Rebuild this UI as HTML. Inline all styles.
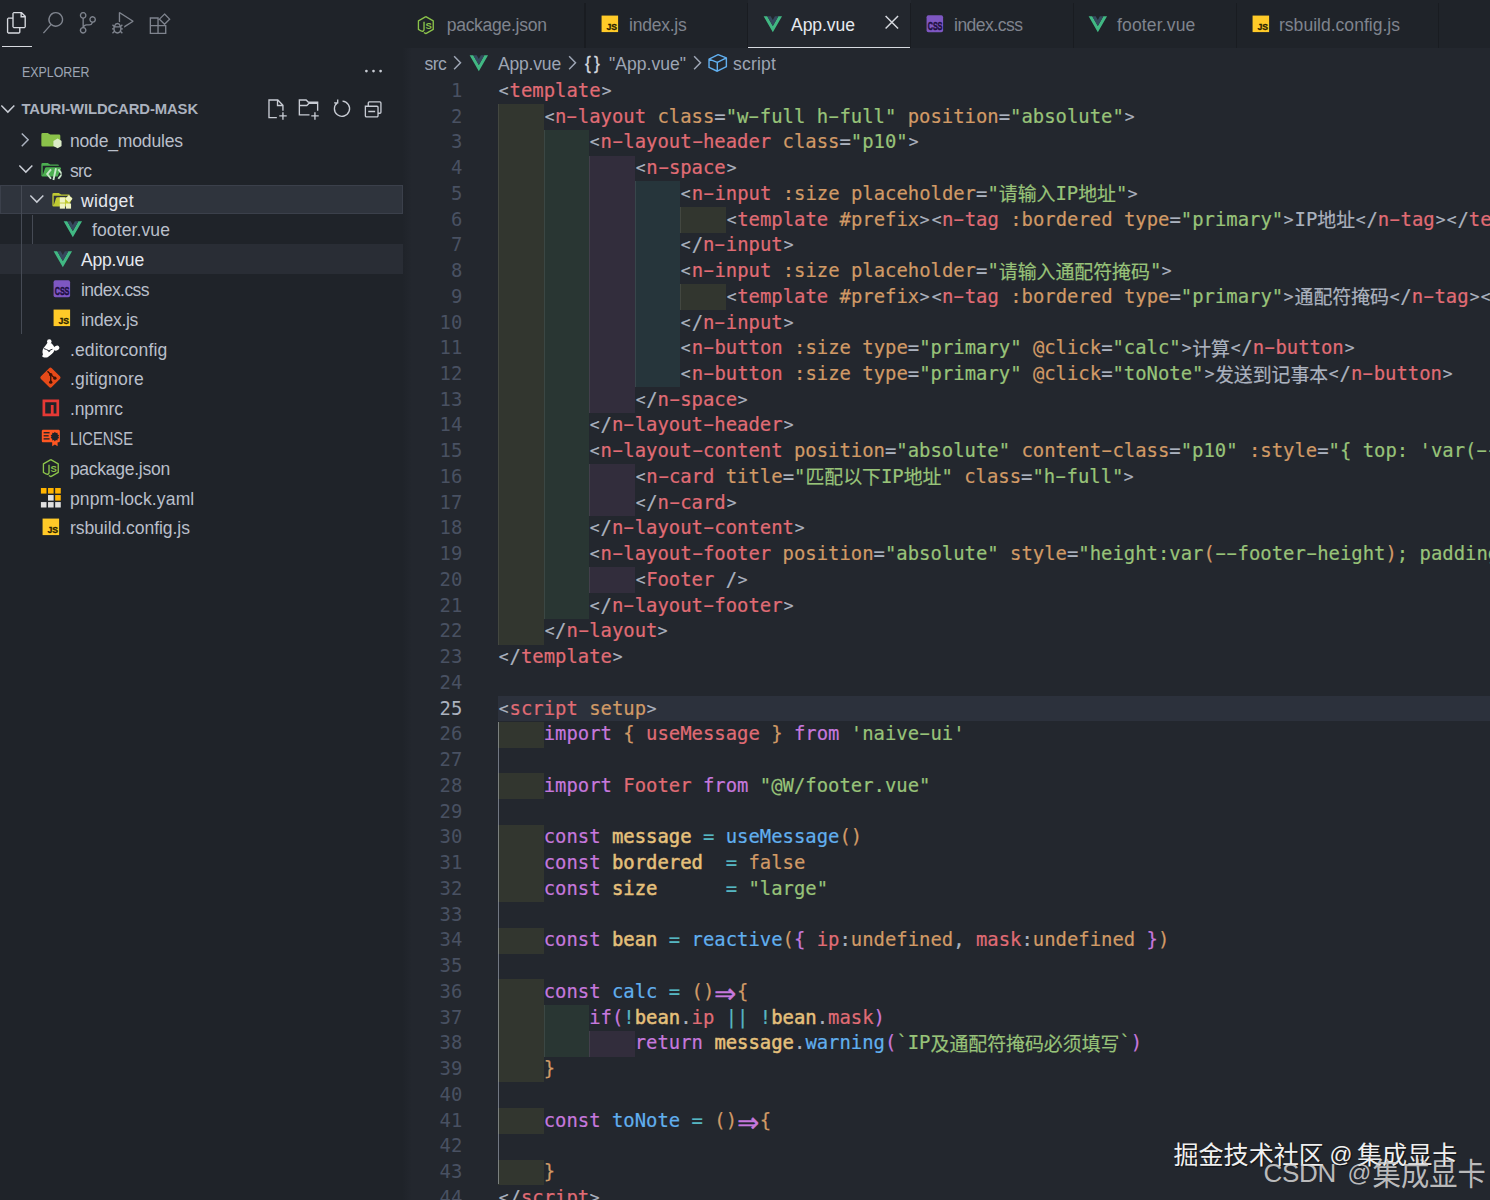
<!DOCTYPE html>
<html lang="zh">
<head>
<meta charset="utf-8">
<title>App.vue - tauri-wildcard-mask</title>
<style>
html,body{margin:0;padding:0;}
body{width:1490px;height:1200px;overflow:hidden;background:#23272e;position:relative;font-family:"Liberation Sans","Noto Sans CJK SC",sans-serif;color:#abb2bf;}
#side{position:absolute;left:0;top:0;width:403px;height:1200px;background:#1f2329;}
#tabs{position:absolute;left:403px;top:0;width:1087px;height:47.5px;background:#1f2329;}
.abs{position:absolute;}
svg{display:block;overflow:visible;}
.ui{font-family:"Liberation Sans","Noto Sans CJK SC",sans-serif;white-space:pre;position:absolute;}
/* code */
.cl{position:absolute;white-space:pre;font-family:"DejaVu Sans Mono","Liberation Mono","Noto Sans CJK SC",monospace;font-size:18.9px;line-height:25.745px;height:25.745px;letter-spacing:0;overflow:visible;}
.cl b.cj{font-weight:normal;font-family:"Noto Sans CJK SC",sans-serif;display:inline-block;height:25.745px;line-height:25.745px;vertical-align:top;position:relative;top:-0.5px;}
.ln{position:absolute;left:403px;width:59.3px;text-align:right;font-family:"DejaVu Sans Mono","Liberation Mono",monospace;font-size:18.9px;line-height:25.745px;height:25.745px;color:#495162;}
.ln.act{color:#abb2bf;}
.rb{position:absolute;display:block;}
.gd{position:absolute;display:block;width:1px;background:rgba(255,255,255,0.085);}
.ab{font-style:normal;display:inline-block;transform:scale(0.86,0.84);}
.hy{font-style:normal;display:inline-block;transform:scaleX(1.75);}
.cl{-webkit-text-stroke:0.2px;}
.cl .yb{-webkit-text-stroke:0.5px;}
.arrow{display:inline-block;width:22.76px;text-align:center;transform:translateY(0.8px) scale(1.9,1.9);}
.wm1{font-size:25.1px;line-height:34px;color:#f0f0f0;white-space:nowrap;font-family:"Liberation Sans","Noto Sans CJK SC",sans-serif;text-shadow:1px 1px 1px rgba(0,0,0,.6);}
.wm2{line-height:38px;color:rgba(214,214,214,.85);white-space:nowrap;font-family:"Liberation Sans","Noto Sans CJK SC",sans-serif;}
</style>
</head>
<body>
<svg width="0" height="0" style="position:absolute">
<defs>
<symbol id="chev-r" viewBox="0 0 16 16"><path d="M5 3.3 L9.700 8 L5 12.700" fill="none" stroke="#abb2bf" stroke-width="1.1"/></symbol>
<symbol id="chev-d" viewBox="0 0 16 16"><path d="M3.2 5.6 L8 10.4 L12.8 5.6" fill="none" stroke="#c8ccd4" stroke-width="1.1"/></symbol>
<symbol id="chev-r2" viewBox="0 0 16 16"><path d="M6 3.2 L10.7 8 L6 12.8" fill="none" stroke="#9da5b4" stroke-width="1.1"/></symbol>
<symbol id="i-vue" viewBox="0 0 24 24"><path fill="#41b883" d="M1.8 3.7 12 21.3 22.2 3.7h-4.1L12 14.3 5.8 3.7z"/><path fill="#35495e" d="M5.8 3.7 12 14.3l6.1-10.6h-3.8L12 7.8 9.6 3.7z"/></symbol>
<symbol id="i-js" viewBox="0 0 24 24"><rect x="2.85" y="2.85" width="18.3" height="18.3" fill="#ffca28"/><text x="20.1" y="19" text-anchor="end" font-family="Liberation Sans,sans-serif" font-weight="bold" font-size="9.6" fill="#2a1f00" stroke="#2a1f00" stroke-width="0.35" letter-spacing="0">JS</text></symbol>
<symbol id="i-css" viewBox="0 0 24 24"><rect x="2.85" y="2.6" width="18.3" height="18.8" rx="2" fill="#7e57c2"/><text transform="translate(12.2 19.3) scale(0.62 1)" x="0" y="0" text-anchor="middle" font-family="Liberation Sans,sans-serif" font-weight="bold" font-size="13" fill="#1d0f40" stroke="#1d0f40" stroke-width="0.5" letter-spacing="-0.3">CSS</text></symbol>
<symbol id="i-nodejs" viewBox="0 0 24 24"><g transform="translate(0 1.500)"><path d="M12 2.600 L20.200 7.300 V16.700 L12 21.400 L9.800 20.100 M12 2.600 L3.800 7.300 V16.700 L6.800 18.400 C8.600 19.200 10 18.400 10 16.800 V8.200" fill="none" stroke="#8bc34a" stroke-width="1.500" stroke-linejoin="round"/><text x="15.200" y="16.200" text-anchor="middle" font-family="Liberation Sans,sans-serif" font-weight="bold" font-size="10.500" fill="#8bc34a">S</text></g></symbol>
<symbol id="i-fnode" viewBox="0 0 32 32"><path fill="#8bc34a" d="M13.844 7.536l-1.288-1.072A2 2 0 0 0 11.276 6H4a2 2 0 0 0-2 2v16a2 2 0 0 0 2 2h24a2 2 0 0 0 2-2V10a2 2 0 0 0-2-2H15.124a2 2 0 0 1-1.280-.464z"/><path fill="#dcedc8" d="M26 14.200l6.200 3.600v7.200L26 28.600l-6.200-3.600v-7.200z"/></symbol>
<symbol id="i-fsrc" viewBox="0 0 32 32"><path fill="#4caf50" d="M28.967 12H9.442a2 2 0 0 0-1.898 1.368L4 24V10h24a2 2 0 0 0-2-2H15.124a2 2 0 0 1-1.280-.464l-1.288-1.072A2 2 0 0 0 11.276 6H4a2 2 0 0 0-2 2v16a2 2 0 0 0 2 2h22l4.805-11.212A2 2 0 0 0 28.967 12z"/><path fill="none" stroke="#c8e6c9" stroke-width="2.800" d="M16.300 15.200 10.600 22.200l5.700 7M27 15.200l5.700 7-5.700 7M23.600 13.600l-3.800 17.400"/></symbol>
<symbol id="i-fwidget" viewBox="0 0 32 32"><path fill="#c0ca33" d="M28.967 12H9.442a2 2 0 0 0-1.898 1.368L4 24V10h24a2 2 0 0 0-2-2H15.124a2 2 0 0 1-1.280-.464l-1.288-1.072A2 2 0 0 0 11.276 6H4a2 2 0 0 0-2 2v16a2 2 0 0 0 2 2h22l4.805-11.212A2 2 0 0 0 28.967 12z"/><g fill="#f0f4c3"><rect x="13" y="12.400" width="7.600" height="7.600"/><rect x="13" y="21.400" width="7.600" height="7.600"/><rect x="22" y="21.400" width="7.600" height="7.600"/><path d="M26.400 8.800l5.600 5.600-5.600 5.600-5.600-5.600z"/></g></symbol>
<symbol id="i-editorconfig" viewBox="0 0 24 24"><g fill="#fdfdfd"><circle cx="10.300" cy="5.100" r="2.500"/><ellipse cx="18.300" cy="12.300" rx="3.300" ry="2.500" transform="rotate(-35 18.300 12.300)"/><path d="M8.300 6.500 L12.600 6.800 C14.500 8.500 16 10.500 16.300 12.800 C16.300 16.500 12.500 20 8.500 22.300 C6.500 23.300 3.200 22.800 2.300 21.300 L3.300 19.300 C2 16.500 3 12.500 5.500 10.300 C6.500 9 7.500 8 8.300 6.500Z"/></g><path fill="none" stroke="#2a2e36" stroke-width="1.100" d="M4.300 12.800 C6.500 13.200 8 14.500 9.800 15.300 C11 14.300 12.500 13.800 13.800 13.600 M8.800 14.300l1 2 1.800-1.200"/></symbol>
<symbol id="i-git" viewBox="0 0 24 24"><rect x="3.100" y="3.300" width="16.900" height="16.900" rx="2.100" fill="#e64a19" transform="rotate(45 11.550 11.750)"/><g fill="none" stroke="#3a1206" stroke-width="1.500"><path d="M8.300 4.800 11.900 8.400 V16.500"/><path d="M12 8.600 16.200 12.200"/></g><g fill="#3a1206"><circle cx="11.900" cy="8.500" r="1.850"/><circle cx="11.900" cy="16.800" r="1.850"/><circle cx="16.500" cy="12.400" r="1.850"/></g></symbol>
<symbol id="i-npm" viewBox="0 0 24 24"><path fill="#e53935" d="M2.800 2.800h18.400v18.400H2.800z"/><path fill="#1f2329" d="M5.800 5.800h12.400v12.400h-3.100V8.900H12v9.300H5.800z"/></symbol>
<symbol id="i-license" viewBox="0 0 24 24"><path fill="#ff5722" d="M3.500 3h17c.8 0 1.500.7 1.500 1.500v11c0 .8-.7 1.500-1.500 1.500H19.500v4.300l-3-2-3 2V17H3.500C2.700 17 2 16.300 2 15.500v-11C2 3.700 2.700 3 3.500 3z"/><g fill="#1f2329"><rect x="4" y="5.600" width="6.600" height="1.500"/><rect x="4" y="9" width="5.600" height="1.500"/><rect x="4" y="12.400" width="6.600" height="1.500"/><path d="M16.500 5.200l1.100 1.500 1.800-.4.100 1.900 1.700.8-1 1.600 1 1.600-1.700.8-.1 1.900-1.800-.4-1.100 1.500-1.100-1.500-1.800.4-.1-1.900-1.700-.8 1-1.600-1-1.600 1.700-.8.100-1.900 1.800.4z"/></g></symbol>
<symbol id="i-pnpm" viewBox="0 0 24 24"><g transform="translate(0 1)"><g fill="#ffb300"><rect x="1" y="1.200" width="6.200" height="6.200"/><rect x="8.900" y="1.200" width="6.200" height="6.200"/><rect x="16.800" y="1.200" width="6.200" height="6.200"/><rect x="16.800" y="9" width="6.200" height="6.200"/></g><g fill="#e0e0e0"><rect x="8.900" y="9" width="6.200" height="6.200"/><rect x="1" y="16.800" width="6.200" height="6.200"/><rect x="8.900" y="16.800" width="6.200" height="6.200"/><rect x="16.800" y="16.800" width="6.200" height="6.200"/></g></g></symbol>
<symbol id="i-symbol" viewBox="0 0 16 16"><path fill="none" stroke="#61afef" stroke-width="1.050" stroke-linejoin="round" d="M8.200 2 L14.300 4.300 V10.800 L7.600 14.200 L1.500 11.400 V5.200 Z M1.500 5.200 L7.600 7.700 L14.300 4.300 M7.600 7.700 V14.200"/></symbol>
</defs>
</svg>
<div id="side"></div>
<div id="tabs"></div>
<!-- activity bar -->
<div class="abs" style="left:2px;top:45.6px;width:30px;height:1.5px;background:#d7dae0;"></div>
<svg class="abs" style="left:6.3px;top:11.8px" width="21.7" height="21.7" viewBox="0 0 24 24"><path fill="#d7dae0" d="M17.500 0h-9L7 1.500V6H2.500L1 7.500v15.070L2.500 24h12.070L16 22.570V18h4.700l1.300-1.430V4.500L17.500 0zm0 2.120l2.380 2.380H17.500V2.120zm-3 20.380h-12v-15H7v9.070L8.500 18h6v4.500zm6-6h-12v-15H16V6h4.500v10.500z"/></svg>
<svg class="abs" style="left:41.500px;top:11.8px" width="21.7" height="21.7" viewBox="0 0 24 24"><path fill="#7f848e" d="M15.250 0a8.250 8.250 0 0 0-6.180 13.720L1 22.880l1.120 1 8.050-9.120A8.251 8.251 0 1 0 15.250.01V0zm0 15a6.750 6.750 0 1 1 0-13.500 6.750 6.750 0 0 1 0 13.500z"/></svg>
<svg class="abs" style="left:76.500px;top:11.8px" width="21.7" height="21.7" viewBox="0 0 24 24"><path fill="#7f848e" d="M21.007 8.222A3.738 3.738 0 0 0 15.045 5.200a3.737 3.737 0 0 0 1.156 6.583 2.988 2.988 0 0 1-2.668 1.670h-2.990a4.456 4.456 0 0 0-2.989 1.165V7.400a3.737 3.737 0 1 0-1.494 0v9.117a3.776 3.776 0 1 0 1.816.099 2.990 2.990 0 0 1 2.668-1.667h2.990a4.484 4.484 0 0 0 4.223-3.039 3.736 3.736 0 0 0 3.250-3.687zM4.565 3.738a2.242 2.242 0 1 1 4.484 0 2.242 2.242 0 0 1-4.484 0zm4.484 16.441a2.242 2.242 0 1 1-4.484 0 2.242 2.242 0 0 1 4.484 0zm8.221-9.715a2.242 2.242 0 1 1 0-4.485 2.242 2.242 0 0 1 0 4.485z"/></svg>
<svg class="abs" style="left:111.500px;top:11.8px" width="21.7" height="21.7" viewBox="0 0 24 24"><path fill="#7f848e" d="M10.940 13.500l-1.320 1.320a3.730 3.730 0 0 0-7.240 0L1.060 13.500 0 14.560l1.720 1.720-.22.220V18H0v1.500h1.500v.080c.077.489.214.966.410 1.420L0 22.940 1.060 24l1.650-1.650A4.308 4.308 0 0 0 6 24a4.310 4.310 0 0 0 3.290-1.650L10.940 24 12 22.940 10.090 21c.198-.464.336-.951.410-1.450v-.100H12V18h-1.500v-1.500l-.22-.22L12 14.560l-1.060-1.060zM6 13.500a2.250 2.250 0 0 1 2.250 2.250h-4.500A2.250 2.250 0 0 1 6 13.500zm3 6a3.330 3.330 0 0 1-3 3 3.330 3.330 0 0 1-3-3v-2.250h6v2.250zm14.760-9.900v1.260L13.500 17.370V15.600l8.500-5.370L9 2v9.460a5.070 5.070 0 0 0-1.500-.72V.630L8.640 0l15.120 9.600z"/></svg>
<svg class="abs" style="left:148.500px;top:12.500px" width="21.7" height="21.7" viewBox="0 0 24 24"><path fill="none" stroke="#7f848e" stroke-width="1.500" d="M1.500 5.500h8.500v8.500h-8.500zM1.500 14h8.500v8.500h-8.500zM10 14h8.500v8.500H10zM17.200 1.200l5.600 5.600-5.600 5.600-5.600-5.600z"/></svg>
<!-- explorer header -->
<svg class="abs" style="left:364px;top:68px" width="20" height="6" viewBox="0 0 20 6"><g fill="#c8ccd4"><circle cx="2.400" cy="3.100" r="1.350"/><circle cx="9.500" cy="3.100" r="1.350"/><circle cx="16.600" cy="3.100" r="1.350"/></g></svg>
<svg class="abs" style="left:-3.200px;top:97.900px" width="21.680" height="21.680" viewBox="0 0 16 16"><use href="#chev-d"/></svg>
<!-- header actions -->
<svg class="abs" style="left:265.600px;top:98px" width="21.680" height="21.680" viewBox="0 0 16 16"><path fill="none" stroke="#c8ccd4" stroke-width="1" d="M8 14.500H2.200V1.500h6.500l3.800 3.800V9.500M8.500 1.500v4h4M12.500 10.500v5.500M9.800 13.200h5.500"/></svg>
<svg class="abs" style="left:298px;top:98px" width="21.680" height="21.680" viewBox="0 0 16 16"><path fill="none" stroke="#c8ccd4" stroke-width="1" d="M8.500 12.500H1V1.500h5l1.500 1.500H14.500V9.500M1 5.500h5.500l1.500-1.500H14M12.500 10.500v5.500M9.800 13.200h5.500"/></svg>
<svg class="abs" style="left:330.500px;top:98.400px" width="21.680" height="21.680" viewBox="0 0 16 16"><path fill="none" stroke="#c8ccd4" stroke-width="1" d="M4.79 3.4A5.6 5.6 0 1 0 8.49 2.32M4.95 1.1V3.6H2.3"/></svg>
<svg class="abs" style="left:363.200px;top:99.300px" width="21.100" height="21.100" viewBox="0 0 16 16"><path fill="none" stroke="#c8ccd4" stroke-width="1" d="M1.800 5.500h8.800a.8.8 0 0 1 .8.800v6.400a.8.800 0 0 1-.8.800H2.600a.8.800 0 0 1-.8-.800zM4 5.500V3a.8.800 0 0 1 .8-.8h8a.8.800 0 0 1 .8.800v7a.8.800 0 0 1-.8.800H11.400M4 9.500h5.200" /></svg>
<!-- indent guides in tree -->
<div class="ui" style="left:21.70px;top:62.23px;font-size:15.20px;line-height:19.00px;color:#9da5b4;transform:scaleX(0.8160);transform-origin:0 0;">EXPLORER</div>
<div class="ui" style="left:21.50px;top:100.17px;font-size:14.85px;line-height:18.56px;color:#abb2bf;letter-spacing:-0.113px;font-weight:bold;">TAURI-WILDCARD-MASK</div>
<div class="ui" style="left:69.90px;top:131.00px;font-size:17.55px;line-height:21.94px;color:#b9bfca;letter-spacing:-0.168px;">node_modules</div>
<svg class="abs" style="left:39.60px;top:128.96px" width="21.68" height="21.68" viewBox="0 0 32 32"><use href="#i-fnode"/></svg>
<svg class="abs" style="left:14.50px;top:128.56px" width="21.68" height="21.68" viewBox="0 0 16 16"><use href="#chev-r"/></svg>
<div class="ui" style="left:69.90px;top:160.80px;font-size:17.55px;line-height:21.94px;color:#b9bfca;letter-spacing:-0.625px;">src</div>
<svg class="abs" style="left:39.60px;top:158.76px" width="21.68" height="21.68" viewBox="0 0 32 32"><use href="#i-fsrc"/></svg>
<svg class="abs" style="left:14.50px;top:158.36px" width="21.68" height="21.68" viewBox="0 0 16 16"><use href="#chev-d"/></svg>
<div class="abs" style="left:0;top:184.50px;width:403px;height:29.20px;background:#2f343d;box-shadow:inset 0 0 0 1px #3b404b;"></div>
<div class="ui" style="left:81.00px;top:190.60px;font-size:17.55px;line-height:21.94px;color:#e6e9ef;letter-spacing:0.385px;">widget</div>
<svg class="abs" style="left:50.50px;top:188.56px" width="21.68" height="21.68" viewBox="0 0 32 32"><use href="#i-fwidget"/></svg>
<svg class="abs" style="left:26.30px;top:188.16px" width="21.68" height="21.68" viewBox="0 0 16 16"><use href="#chev-d"/></svg>
<div class="ui" style="left:92.00px;top:220.40px;font-size:17.55px;line-height:21.94px;color:#b9bfca;letter-spacing:0.100px;">footer.vue</div>
<svg class="abs" style="left:62.40px;top:217.96px" width="21.68" height="21.68" viewBox="0 0 24 24"><use href="#i-vue"/></svg>
<div class="abs" style="left:0;top:243.80px;width:403px;height:29.80px;background:#292d35;"></div>
<div class="ui" style="left:81.00px;top:250.20px;font-size:17.55px;line-height:21.94px;color:#e6e9ef;letter-spacing:-0.192px;">App.vue</div>
<svg class="abs" style="left:51.60px;top:247.76px" width="21.68" height="21.68" viewBox="0 0 24 24"><use href="#i-vue"/></svg>
<div class="ui" style="left:81.00px;top:280.00px;font-size:17.55px;line-height:21.94px;color:#b9bfca;letter-spacing:-0.566px;">index.css</div>
<svg class="abs" style="left:51.00px;top:277.56px" width="21.68" height="21.68" viewBox="0 0 24 24"><use href="#i-css"/></svg>
<div class="ui" style="left:81.00px;top:309.80px;font-size:17.55px;line-height:21.94px;color:#b9bfca;letter-spacing:-0.307px;">index.js</div>
<svg class="abs" style="left:51.00px;top:307.36px" width="21.68" height="21.68" viewBox="0 0 24 24"><use href="#i-js"/></svg>
<div class="ui" style="left:69.90px;top:339.60px;font-size:17.55px;line-height:21.94px;color:#b9bfca;letter-spacing:0.153px;">.editorconfig</div>
<svg class="abs" style="left:40.10px;top:337.16px" width="21.68" height="21.68" viewBox="0 0 24 24"><use href="#i-editorconfig"/></svg>
<div class="ui" style="left:69.90px;top:369.40px;font-size:17.55px;line-height:21.94px;color:#b9bfca;letter-spacing:0.188px;">.gitignore</div>
<svg class="abs" style="left:39.90px;top:366.96px" width="21.68" height="21.68" viewBox="0 0 24 24"><use href="#i-git"/></svg>
<div class="ui" style="left:69.90px;top:399.20px;font-size:17.55px;line-height:21.94px;color:#b9bfca;letter-spacing:-0.099px;">.npmrc</div>
<svg class="abs" style="left:39.90px;top:396.76px" width="21.68" height="21.68" viewBox="0 0 24 24"><use href="#i-npm"/></svg>
<div class="ui" style="left:69.90px;top:429.00px;font-size:17.55px;line-height:21.94px;color:#b9bfca;transform:scaleX(0.8397);transform-origin:0 0;">LICENSE</div>
<svg class="abs" style="left:40.00px;top:426.56px" width="21.68" height="21.68" viewBox="0 0 24 24"><use href="#i-license"/></svg>
<div class="ui" style="left:69.90px;top:458.80px;font-size:17.55px;line-height:21.94px;color:#b9bfca;letter-spacing:-0.277px;">package.json</div>
<svg class="abs" style="left:40.00px;top:456.36px" width="21.68" height="21.68" viewBox="0 0 24 24"><use href="#i-nodejs"/></svg>
<div class="ui" style="left:69.90px;top:488.60px;font-size:17.55px;line-height:21.94px;color:#b9bfca;letter-spacing:0.124px;">pnpm-lock.yaml</div>
<svg class="abs" style="left:39.60px;top:486.16px" width="21.68" height="21.68" viewBox="0 0 24 24"><use href="#i-pnpm"/></svg>
<div class="ui" style="left:69.90px;top:518.40px;font-size:17.55px;line-height:21.94px;color:#b9bfca;letter-spacing:-0.049px;">rsbuild.config.js</div>
<svg class="abs" style="left:39.80px;top:515.96px" width="21.68" height="21.68" viewBox="0 0 24 24"><use href="#i-js"/></svg>
<div class="abs" style="left:21px;top:185.200px;width:1px;height:148.800px;background:#454a54;"></div>
<div class="abs" style="left:32px;top:214.500px;width:1px;height:29.500px;background:#454a54;"></div>
<svg class="abs" style="left:415.30px;top:12.70px" width="21.68" height="21.68" viewBox="0 0 24 24"><use href="#i-nodejs"/></svg>
<div class="ui" style="left:446.70px;top:14.85px;font-size:17.55px;line-height:21.94px;color:#7f848e;letter-spacing:-0.277px;">package.json</div>
<svg class="abs" style="left:598.50px;top:12.70px" width="21.68" height="21.68" viewBox="0 0 24 24"><use href="#i-js"/></svg>
<div class="ui" style="left:629.00px;top:14.85px;font-size:17.55px;line-height:21.94px;color:#7f848e;letter-spacing:-0.244px;">index.js</div>
<div class="abs" style="left:747.8px;top:0px;width:163.0px;height:47.6px;background:#23272e;border-bottom:1.3px solid #d7dae0;box-sizing:border-box;"></div>
<svg class="abs" style="left:762.20px;top:12.70px" width="21.68" height="21.68" viewBox="0 0 24 24"><use href="#i-vue"/></svg>
<div class="ui" style="left:791.00px;top:14.85px;font-size:17.55px;line-height:21.94px;color:#e6e9ef;letter-spacing:-0.049px;">App.vue</div>
<svg class="abs" style="left:924.00px;top:12.70px" width="21.68" height="21.68" viewBox="0 0 24 24"><use href="#i-css"/></svg>
<div class="ui" style="left:954.00px;top:14.85px;font-size:17.55px;line-height:21.94px;color:#7f848e;letter-spacing:-0.510px;">index.css</div>
<svg class="abs" style="left:1087.20px;top:12.70px" width="21.68" height="21.68" viewBox="0 0 24 24"><use href="#i-vue"/></svg>
<div class="ui" style="left:1117.00px;top:14.85px;font-size:17.55px;line-height:21.94px;color:#7f848e;letter-spacing:0.150px;">footer.vue</div>
<svg class="abs" style="left:1249.50px;top:12.70px" width="21.68" height="21.68" viewBox="0 0 24 24"><use href="#i-js"/></svg>
<div class="ui" style="left:1279.00px;top:14.85px;font-size:17.55px;line-height:21.94px;color:#7f848e;letter-spacing:0.010px;">rsbuild.config.js</div>
<div class="abs" style="left:584.2px;top:3px;width:1.5px;height:44.5px;background:#191c21;"></div>
<div class="abs" style="left:746.5px;top:3px;width:1.5px;height:44.5px;background:#191c21;"></div>
<div class="abs" style="left:909.5px;top:3px;width:1.5px;height:44.5px;background:#191c21;"></div>
<div class="abs" style="left:1072.5px;top:3px;width:1.5px;height:44.5px;background:#191c21;"></div>
<div class="abs" style="left:1235.5px;top:3px;width:1.5px;height:44.5px;background:#191c21;"></div>
<div class="abs" style="left:1437.5px;top:3px;width:1.5px;height:44.5px;background:#191c21;"></div>
<!-- close x on active tab -->
<svg class="abs" style="left:880.500px;top:12.300px" width="21.680" height="21.680" viewBox="0 0 16 16"><path d="M3.400 3 L12.600 12.200 M12.600 3 L3.400 12.200" stroke="#d7dae0" stroke-width="1.100" fill="none"/></svg>
<div class="ui" style="left:424.60px;top:53.55px;font-size:17.55px;line-height:21.94px;color:#9da5b4;letter-spacing:-0.625px;">src</div>
<div class="ui" style="left:498.00px;top:53.55px;font-size:17.55px;line-height:21.94px;color:#9da5b4;letter-spacing:-0.192px;">App.vue</div>
<div class="ui" style="left:585.00px;top:52.75px;font-size:17.55px;line-height:21.94px;color:#d4d8df;letter-spacing:3.141px;-webkit-text-stroke:0.3px;">{}</div>
<div class="ui" style="left:609.00px;top:53.55px;font-size:17.55px;line-height:21.94px;color:#9da5b4;letter-spacing:0.024px;">"App.vue"</div>
<div class="ui" style="left:733.00px;top:53.55px;font-size:17.55px;line-height:21.94px;color:#9da5b4;letter-spacing:0.185px;">script</div>
<svg class="abs" style="left:446.00px;top:52.2px" width="21.68" height="21.68" viewBox="0 0 16 16"><use href="#chev-r2"/></svg>
<svg class="abs" style="left:561.30px;top:52.2px" width="21.68" height="21.68" viewBox="0 0 16 16"><use href="#chev-r2"/></svg>
<svg class="abs" style="left:686.30px;top:52.2px" width="21.68" height="21.68" viewBox="0 0 16 16"><use href="#chev-r2"/></svg>
<svg class="abs" style="left:468.2px;top:51.9px" width="21.68" height="21.68" viewBox="0 0 24 24"><use href="#i-vue"/></svg>
<svg class="abs" style="left:707px;top:52.2px" width="21.68" height="21.68" viewBox="0 0 16 16"><use href="#i-symbol"/></svg>
<div class="abs" style="left:403px;top:47.5px;width:9px;height:1153px;background:linear-gradient(90deg,rgba(30,34,40,.75),rgba(35,39,46,0));"></div>
<!-- current line highlight -->
<div class="abs" style="left:498px;top:696px;width:992px;height:25.2px;background:#2c313c;"></div>
<!-- active indent guide -->
<div class="abs" style="left:497.6px;top:721.5px;width:1.7px;height:462.5px;background:#717783;"></div>
<div class="ln" style="top:77.80px">1</div>
<div class="cl" style="top:77.80px;left:498.20px"><span style="color:#abb2bf"><i class="ab">&lt;</i></span><span style="color:#e06c75">template</span><span style="color:#abb2bf"><i class="ab">&gt;</i></span></div>
<i class="rb" style="left:498px;top:104px;width:46px;height:26px;background:rgba(255,255,64,0.07)"></i>
<i class="gd" style="left:498px;top:104px;height:26px"></i>
<div class="ln" style="top:103.55px">2</div>
<div class="cl" style="top:103.55px;left:543.72px"><span style="color:#abb2bf"><i class="ab">&lt;</i></span><span style="color:#e06c75">n<i class="hy">-</i>layout</span><span style="color:#abb2bf"> </span><span style="color:#d19a66">class</span><span style="color:#abb2bf">=</span><span style="color:#98c379">"w<i class="hy">-</i>full h<i class="hy">-</i>full"</span><span style="color:#abb2bf"> </span><span style="color:#d19a66">position</span><span style="color:#abb2bf">=</span><span style="color:#98c379">"absolute"</span><span style="color:#abb2bf"><i class="ab">&gt;</i></span></div>
<i class="rb" style="left:498px;top:130px;width:46px;height:26px;background:rgba(255,255,64,0.07)"></i>
<i class="rb" style="left:544px;top:130px;width:45px;height:26px;background:rgba(127,255,127,0.07)"></i>
<i class="gd" style="left:498px;top:130px;height:26px"></i>
<i class="gd" style="left:544px;top:130px;height:26px"></i>
<div class="ln" style="top:129.29px">3</div>
<div class="cl" style="top:129.29px;left:589.24px"><span style="color:#abb2bf"><i class="ab">&lt;</i></span><span style="color:#e06c75">n<i class="hy">-</i>layout<i class="hy">-</i>header</span><span style="color:#abb2bf"> </span><span style="color:#d19a66">class</span><span style="color:#abb2bf">=</span><span style="color:#98c379">"p10"</span><span style="color:#abb2bf"><i class="ab">&gt;</i></span></div>
<i class="rb" style="left:498px;top:156px;width:46px;height:25px;background:rgba(255,255,64,0.07)"></i>
<i class="rb" style="left:544px;top:156px;width:45px;height:25px;background:rgba(127,255,127,0.07)"></i>
<i class="rb" style="left:589px;top:156px;width:46px;height:25px;background:rgba(255,127,255,0.07)"></i>
<i class="gd" style="left:498px;top:156px;height:25px"></i>
<i class="gd" style="left:544px;top:156px;height:25px"></i>
<i class="gd" style="left:589px;top:156px;height:25px"></i>
<div class="ln" style="top:155.03px">4</div>
<div class="cl" style="top:155.03px;left:634.76px"><span style="color:#abb2bf"><i class="ab">&lt;</i></span><span style="color:#e06c75">n<i class="hy">-</i>space</span><span style="color:#abb2bf"><i class="ab">&gt;</i></span></div>
<i class="rb" style="left:498px;top:181px;width:46px;height:26px;background:rgba(255,255,64,0.07)"></i>
<i class="rb" style="left:544px;top:181px;width:45px;height:26px;background:rgba(127,255,127,0.07)"></i>
<i class="rb" style="left:589px;top:181px;width:46px;height:26px;background:rgba(255,127,255,0.07)"></i>
<i class="rb" style="left:635px;top:181px;width:45px;height:26px;background:rgba(79,236,236,0.07)"></i>
<i class="gd" style="left:498px;top:181px;height:26px"></i>
<i class="gd" style="left:544px;top:181px;height:26px"></i>
<i class="gd" style="left:589px;top:181px;height:26px"></i>
<i class="gd" style="left:635px;top:181px;height:26px"></i>
<div class="ln" style="top:180.78px">5</div>
<div class="cl" style="top:180.78px;left:680.28px"><span style="color:#abb2bf"><i class="ab">&lt;</i></span><span style="color:#e06c75">n<i class="hy">-</i>input</span><span style="color:#abb2bf"> </span><span style="color:#d19a66">:size</span><span style="color:#abb2bf"> </span><span style="color:#d19a66">placeholder</span><span style="color:#abb2bf">=</span><span style="color:#98c379">"<b class="cj">请输入</b>IP<b class="cj">地址</b>"</span><span style="color:#abb2bf"><i class="ab">&gt;</i></span></div>
<i class="rb" style="left:498px;top:207px;width:46px;height:26px;background:rgba(255,255,64,0.07)"></i>
<i class="rb" style="left:544px;top:207px;width:45px;height:26px;background:rgba(127,255,127,0.07)"></i>
<i class="rb" style="left:589px;top:207px;width:46px;height:26px;background:rgba(255,127,255,0.07)"></i>
<i class="rb" style="left:635px;top:207px;width:45px;height:26px;background:rgba(79,236,236,0.07)"></i>
<i class="rb" style="left:680px;top:207px;width:46px;height:26px;background:rgba(255,255,64,0.07)"></i>
<i class="gd" style="left:498px;top:207px;height:26px"></i>
<i class="gd" style="left:544px;top:207px;height:26px"></i>
<i class="gd" style="left:589px;top:207px;height:26px"></i>
<i class="gd" style="left:635px;top:207px;height:26px"></i>
<i class="gd" style="left:680px;top:207px;height:26px"></i>
<div class="ln" style="top:206.52px">6</div>
<div class="cl" style="top:206.52px;left:725.80px"><span style="color:#abb2bf"><i class="ab">&lt;</i></span><span style="color:#e06c75">template</span><span style="color:#abb2bf"> </span><span style="color:#d19a66">#prefix</span><span style="color:#abb2bf"><i class="ab">&gt;</i><i class="ab">&lt;</i></span><span style="color:#e06c75">n<i class="hy">-</i>tag</span><span style="color:#abb2bf"> </span><span style="color:#d19a66">:bordered</span><span style="color:#abb2bf"> </span><span style="color:#d19a66">type</span><span style="color:#abb2bf">=</span><span style="color:#98c379">"primary"</span><span style="color:#abb2bf"><i class="ab">&gt;</i>IP<b class="cj">地址</b></span><span style="color:#abb2bf"><i class="ab">&lt;</i>/</span><span style="color:#e06c75">n<i class="hy">-</i>tag</span><span style="color:#abb2bf"><i class="ab">&gt;</i></span><span style="color:#abb2bf"><i class="ab">&lt;</i>/</span><span style="color:#e06c75">template</span><span style="color:#abb2bf"><i class="ab">&gt;</i></span></div>
<i class="rb" style="left:498px;top:233px;width:46px;height:26px;background:rgba(255,255,64,0.07)"></i>
<i class="rb" style="left:544px;top:233px;width:45px;height:26px;background:rgba(127,255,127,0.07)"></i>
<i class="rb" style="left:589px;top:233px;width:46px;height:26px;background:rgba(255,127,255,0.07)"></i>
<i class="rb" style="left:635px;top:233px;width:45px;height:26px;background:rgba(79,236,236,0.07)"></i>
<i class="gd" style="left:498px;top:233px;height:26px"></i>
<i class="gd" style="left:544px;top:233px;height:26px"></i>
<i class="gd" style="left:589px;top:233px;height:26px"></i>
<i class="gd" style="left:635px;top:233px;height:26px"></i>
<div class="ln" style="top:232.27px">7</div>
<div class="cl" style="top:232.27px;left:680.28px"><span style="color:#abb2bf"><i class="ab">&lt;</i>/</span><span style="color:#e06c75">n<i class="hy">-</i>input</span><span style="color:#abb2bf"><i class="ab">&gt;</i></span></div>
<i class="rb" style="left:498px;top:259px;width:46px;height:25px;background:rgba(255,255,64,0.07)"></i>
<i class="rb" style="left:544px;top:259px;width:45px;height:25px;background:rgba(127,255,127,0.07)"></i>
<i class="rb" style="left:589px;top:259px;width:46px;height:25px;background:rgba(255,127,255,0.07)"></i>
<i class="rb" style="left:635px;top:259px;width:45px;height:25px;background:rgba(79,236,236,0.07)"></i>
<i class="gd" style="left:498px;top:259px;height:25px"></i>
<i class="gd" style="left:544px;top:259px;height:25px"></i>
<i class="gd" style="left:589px;top:259px;height:25px"></i>
<i class="gd" style="left:635px;top:259px;height:25px"></i>
<div class="ln" style="top:258.01px">8</div>
<div class="cl" style="top:258.01px;left:680.28px"><span style="color:#abb2bf"><i class="ab">&lt;</i></span><span style="color:#e06c75">n<i class="hy">-</i>input</span><span style="color:#abb2bf"> </span><span style="color:#d19a66">:size</span><span style="color:#abb2bf"> </span><span style="color:#d19a66">placeholder</span><span style="color:#abb2bf">=</span><span style="color:#98c379">"<b class="cj">请输入通配符掩码</b>"</span><span style="color:#abb2bf"><i class="ab">&gt;</i></span></div>
<i class="rb" style="left:498px;top:284px;width:46px;height:26px;background:rgba(255,255,64,0.07)"></i>
<i class="rb" style="left:544px;top:284px;width:45px;height:26px;background:rgba(127,255,127,0.07)"></i>
<i class="rb" style="left:589px;top:284px;width:46px;height:26px;background:rgba(255,127,255,0.07)"></i>
<i class="rb" style="left:635px;top:284px;width:45px;height:26px;background:rgba(79,236,236,0.07)"></i>
<i class="rb" style="left:680px;top:284px;width:46px;height:26px;background:rgba(255,255,64,0.07)"></i>
<i class="gd" style="left:498px;top:284px;height:26px"></i>
<i class="gd" style="left:544px;top:284px;height:26px"></i>
<i class="gd" style="left:589px;top:284px;height:26px"></i>
<i class="gd" style="left:635px;top:284px;height:26px"></i>
<i class="gd" style="left:680px;top:284px;height:26px"></i>
<div class="ln" style="top:283.76px">9</div>
<div class="cl" style="top:283.76px;left:725.80px"><span style="color:#abb2bf"><i class="ab">&lt;</i></span><span style="color:#e06c75">template</span><span style="color:#abb2bf"> </span><span style="color:#d19a66">#prefix</span><span style="color:#abb2bf"><i class="ab">&gt;</i><i class="ab">&lt;</i></span><span style="color:#e06c75">n<i class="hy">-</i>tag</span><span style="color:#abb2bf"> </span><span style="color:#d19a66">:bordered</span><span style="color:#abb2bf"> </span><span style="color:#d19a66">type</span><span style="color:#abb2bf">=</span><span style="color:#98c379">"primary"</span><span style="color:#abb2bf"><i class="ab">&gt;</i><b class="cj">通配符掩码</b></span><span style="color:#abb2bf"><i class="ab">&lt;</i>/</span><span style="color:#e06c75">n<i class="hy">-</i>tag</span><span style="color:#abb2bf"><i class="ab">&gt;</i></span><span style="color:#abb2bf"><i class="ab">&lt;</i>/</span><span style="color:#e06c75">template</span><span style="color:#abb2bf"><i class="ab">&gt;</i></span></div>
<i class="rb" style="left:498px;top:310px;width:46px;height:26px;background:rgba(255,255,64,0.07)"></i>
<i class="rb" style="left:544px;top:310px;width:45px;height:26px;background:rgba(127,255,127,0.07)"></i>
<i class="rb" style="left:589px;top:310px;width:46px;height:26px;background:rgba(255,127,255,0.07)"></i>
<i class="rb" style="left:635px;top:310px;width:45px;height:26px;background:rgba(79,236,236,0.07)"></i>
<i class="gd" style="left:498px;top:310px;height:26px"></i>
<i class="gd" style="left:544px;top:310px;height:26px"></i>
<i class="gd" style="left:589px;top:310px;height:26px"></i>
<i class="gd" style="left:635px;top:310px;height:26px"></i>
<div class="ln" style="top:309.50px">10</div>
<div class="cl" style="top:309.50px;left:680.28px"><span style="color:#abb2bf"><i class="ab">&lt;</i>/</span><span style="color:#e06c75">n<i class="hy">-</i>input</span><span style="color:#abb2bf"><i class="ab">&gt;</i></span></div>
<i class="rb" style="left:498px;top:336px;width:46px;height:25px;background:rgba(255,255,64,0.07)"></i>
<i class="rb" style="left:544px;top:336px;width:45px;height:25px;background:rgba(127,255,127,0.07)"></i>
<i class="rb" style="left:589px;top:336px;width:46px;height:25px;background:rgba(255,127,255,0.07)"></i>
<i class="rb" style="left:635px;top:336px;width:45px;height:25px;background:rgba(79,236,236,0.07)"></i>
<i class="gd" style="left:498px;top:336px;height:25px"></i>
<i class="gd" style="left:544px;top:336px;height:25px"></i>
<i class="gd" style="left:589px;top:336px;height:25px"></i>
<i class="gd" style="left:635px;top:336px;height:25px"></i>
<div class="ln" style="top:335.25px">11</div>
<div class="cl" style="top:335.25px;left:680.28px"><span style="color:#abb2bf"><i class="ab">&lt;</i></span><span style="color:#e06c75">n<i class="hy">-</i>button</span><span style="color:#abb2bf"> </span><span style="color:#d19a66">:size</span><span style="color:#abb2bf"> </span><span style="color:#d19a66">type</span><span style="color:#abb2bf">=</span><span style="color:#98c379">"primary"</span><span style="color:#abb2bf"> </span><span style="color:#d19a66">@click</span><span style="color:#abb2bf">=</span><span style="color:#98c379">"calc"</span><span style="color:#abb2bf"><i class="ab">&gt;</i><b class="cj">计算</b></span><span style="color:#abb2bf"><i class="ab">&lt;</i>/</span><span style="color:#e06c75">n<i class="hy">-</i>button</span><span style="color:#abb2bf"><i class="ab">&gt;</i></span></div>
<i class="rb" style="left:498px;top:361px;width:46px;height:26px;background:rgba(255,255,64,0.07)"></i>
<i class="rb" style="left:544px;top:361px;width:45px;height:26px;background:rgba(127,255,127,0.07)"></i>
<i class="rb" style="left:589px;top:361px;width:46px;height:26px;background:rgba(255,127,255,0.07)"></i>
<i class="rb" style="left:635px;top:361px;width:45px;height:26px;background:rgba(79,236,236,0.07)"></i>
<i class="gd" style="left:498px;top:361px;height:26px"></i>
<i class="gd" style="left:544px;top:361px;height:26px"></i>
<i class="gd" style="left:589px;top:361px;height:26px"></i>
<i class="gd" style="left:635px;top:361px;height:26px"></i>
<div class="ln" style="top:361.00px">12</div>
<div class="cl" style="top:361.00px;left:680.28px"><span style="color:#abb2bf"><i class="ab">&lt;</i></span><span style="color:#e06c75">n<i class="hy">-</i>button</span><span style="color:#abb2bf"> </span><span style="color:#d19a66">:size</span><span style="color:#abb2bf"> </span><span style="color:#d19a66">type</span><span style="color:#abb2bf">=</span><span style="color:#98c379">"primary"</span><span style="color:#abb2bf"> </span><span style="color:#d19a66">@click</span><span style="color:#abb2bf">=</span><span style="color:#98c379">"toNote"</span><span style="color:#abb2bf"><i class="ab">&gt;</i><b class="cj">发送到记事本</b></span><span style="color:#abb2bf"><i class="ab">&lt;</i>/</span><span style="color:#e06c75">n<i class="hy">-</i>button</span><span style="color:#abb2bf"><i class="ab">&gt;</i></span></div>
<i class="rb" style="left:498px;top:387px;width:46px;height:26px;background:rgba(255,255,64,0.07)"></i>
<i class="rb" style="left:544px;top:387px;width:45px;height:26px;background:rgba(127,255,127,0.07)"></i>
<i class="rb" style="left:589px;top:387px;width:46px;height:26px;background:rgba(255,127,255,0.07)"></i>
<i class="gd" style="left:498px;top:387px;height:26px"></i>
<i class="gd" style="left:544px;top:387px;height:26px"></i>
<i class="gd" style="left:589px;top:387px;height:26px"></i>
<div class="ln" style="top:386.74px">13</div>
<div class="cl" style="top:386.74px;left:634.76px"><span style="color:#abb2bf"><i class="ab">&lt;</i>/</span><span style="color:#e06c75">n<i class="hy">-</i>space</span><span style="color:#abb2bf"><i class="ab">&gt;</i></span></div>
<i class="rb" style="left:498px;top:413px;width:46px;height:26px;background:rgba(255,255,64,0.07)"></i>
<i class="rb" style="left:544px;top:413px;width:45px;height:26px;background:rgba(127,255,127,0.07)"></i>
<i class="gd" style="left:498px;top:413px;height:26px"></i>
<i class="gd" style="left:544px;top:413px;height:26px"></i>
<div class="ln" style="top:412.49px">14</div>
<div class="cl" style="top:412.49px;left:589.24px"><span style="color:#abb2bf"><i class="ab">&lt;</i>/</span><span style="color:#e06c75">n<i class="hy">-</i>layout<i class="hy">-</i>header</span><span style="color:#abb2bf"><i class="ab">&gt;</i></span></div>
<i class="rb" style="left:498px;top:439px;width:46px;height:25px;background:rgba(255,255,64,0.07)"></i>
<i class="rb" style="left:544px;top:439px;width:45px;height:25px;background:rgba(127,255,127,0.07)"></i>
<i class="gd" style="left:498px;top:439px;height:25px"></i>
<i class="gd" style="left:544px;top:439px;height:25px"></i>
<div class="ln" style="top:438.23px">15</div>
<div class="cl" style="top:438.23px;left:589.24px"><span style="color:#abb2bf"><i class="ab">&lt;</i></span><span style="color:#e06c75">n<i class="hy">-</i>layout<i class="hy">-</i>content</span><span style="color:#abb2bf"> </span><span style="color:#d19a66">position</span><span style="color:#abb2bf">=</span><span style="color:#98c379">"absolute"</span><span style="color:#abb2bf"> </span><span style="color:#d19a66">content<i class="hy">-</i>class</span><span style="color:#abb2bf">=</span><span style="color:#98c379">"p10"</span><span style="color:#abb2bf"> </span><span style="color:#d19a66">:style</span><span style="color:#abb2bf">=</span><span style="color:#98c379">"{ top: 'var(<i class="hy">-</i><i class="hy">-</i>header<i class="hy">-</i>height)'</span></div>
<i class="rb" style="left:498px;top:464px;width:46px;height:26px;background:rgba(255,255,64,0.07)"></i>
<i class="rb" style="left:544px;top:464px;width:45px;height:26px;background:rgba(127,255,127,0.07)"></i>
<i class="rb" style="left:589px;top:464px;width:46px;height:26px;background:rgba(255,127,255,0.07)"></i>
<i class="gd" style="left:498px;top:464px;height:26px"></i>
<i class="gd" style="left:544px;top:464px;height:26px"></i>
<i class="gd" style="left:589px;top:464px;height:26px"></i>
<div class="ln" style="top:463.98px">16</div>
<div class="cl" style="top:463.98px;left:634.76px"><span style="color:#abb2bf"><i class="ab">&lt;</i></span><span style="color:#e06c75">n<i class="hy">-</i>card</span><span style="color:#abb2bf"> </span><span style="color:#d19a66">title</span><span style="color:#abb2bf">=</span><span style="color:#98c379">"<b class="cj">匹配以下</b>IP<b class="cj">地址</b>"</span><span style="color:#abb2bf"> </span><span style="color:#d19a66">class</span><span style="color:#abb2bf">=</span><span style="color:#98c379">"h<i class="hy">-</i>full"</span><span style="color:#abb2bf"><i class="ab">&gt;</i></span></div>
<i class="rb" style="left:498px;top:490px;width:46px;height:26px;background:rgba(255,255,64,0.07)"></i>
<i class="rb" style="left:544px;top:490px;width:45px;height:26px;background:rgba(127,255,127,0.07)"></i>
<i class="rb" style="left:589px;top:490px;width:46px;height:26px;background:rgba(255,127,255,0.07)"></i>
<i class="gd" style="left:498px;top:490px;height:26px"></i>
<i class="gd" style="left:544px;top:490px;height:26px"></i>
<i class="gd" style="left:589px;top:490px;height:26px"></i>
<div class="ln" style="top:489.72px">17</div>
<div class="cl" style="top:489.72px;left:634.76px"><span style="color:#abb2bf"><i class="ab">&lt;</i>/</span><span style="color:#e06c75">n<i class="hy">-</i>card</span><span style="color:#abb2bf"><i class="ab">&gt;</i></span></div>
<i class="rb" style="left:498px;top:516px;width:46px;height:26px;background:rgba(255,255,64,0.07)"></i>
<i class="rb" style="left:544px;top:516px;width:45px;height:26px;background:rgba(127,255,127,0.07)"></i>
<i class="gd" style="left:498px;top:516px;height:26px"></i>
<i class="gd" style="left:544px;top:516px;height:26px"></i>
<div class="ln" style="top:515.47px">18</div>
<div class="cl" style="top:515.47px;left:589.24px"><span style="color:#abb2bf"><i class="ab">&lt;</i>/</span><span style="color:#e06c75">n<i class="hy">-</i>layout<i class="hy">-</i>content</span><span style="color:#abb2bf"><i class="ab">&gt;</i></span></div>
<i class="rb" style="left:498px;top:542px;width:46px;height:25px;background:rgba(255,255,64,0.07)"></i>
<i class="rb" style="left:544px;top:542px;width:45px;height:25px;background:rgba(127,255,127,0.07)"></i>
<i class="gd" style="left:498px;top:542px;height:25px"></i>
<i class="gd" style="left:544px;top:542px;height:25px"></i>
<div class="ln" style="top:541.21px">19</div>
<div class="cl" style="top:541.21px;left:589.24px"><span style="color:#abb2bf"><i class="ab">&lt;</i></span><span style="color:#e06c75">n<i class="hy">-</i>layout<i class="hy">-</i>footer</span><span style="color:#abb2bf"> </span><span style="color:#d19a66">position</span><span style="color:#abb2bf">=</span><span style="color:#98c379">"absolute"</span><span style="color:#abb2bf"> </span><span style="color:#d19a66">style</span><span style="color:#abb2bf">=</span><span style="color:#98c379">"height:var</span><span style="color:#d19a66">(</span><span style="color:#98c379"><i class="hy">-</i><i class="hy">-</i>footer<i class="hy">-</i>height</span><span style="color:#d19a66">)</span><span style="color:#98c379">; padding:0px"</span></div>
<i class="rb" style="left:498px;top:567px;width:46px;height:26px;background:rgba(255,255,64,0.07)"></i>
<i class="rb" style="left:544px;top:567px;width:45px;height:26px;background:rgba(127,255,127,0.07)"></i>
<i class="rb" style="left:589px;top:567px;width:46px;height:26px;background:rgba(255,127,255,0.07)"></i>
<i class="gd" style="left:498px;top:567px;height:26px"></i>
<i class="gd" style="left:544px;top:567px;height:26px"></i>
<i class="gd" style="left:589px;top:567px;height:26px"></i>
<div class="ln" style="top:566.96px">20</div>
<div class="cl" style="top:566.96px;left:634.76px"><span style="color:#abb2bf"><i class="ab">&lt;</i></span><span style="color:#e06c75">Footer</span><span style="color:#abb2bf"> /<i class="ab">&gt;</i></span></div>
<i class="rb" style="left:498px;top:593px;width:46px;height:26px;background:rgba(255,255,64,0.07)"></i>
<i class="rb" style="left:544px;top:593px;width:45px;height:26px;background:rgba(127,255,127,0.07)"></i>
<i class="gd" style="left:498px;top:593px;height:26px"></i>
<i class="gd" style="left:544px;top:593px;height:26px"></i>
<div class="ln" style="top:592.70px">21</div>
<div class="cl" style="top:592.70px;left:589.24px"><span style="color:#abb2bf"><i class="ab">&lt;</i>/</span><span style="color:#e06c75">n<i class="hy">-</i>layout<i class="hy">-</i>footer</span><span style="color:#abb2bf"><i class="ab">&gt;</i></span></div>
<i class="rb" style="left:498px;top:619px;width:46px;height:26px;background:rgba(255,255,64,0.07)"></i>
<i class="gd" style="left:498px;top:619px;height:26px"></i>
<div class="ln" style="top:618.44px">22</div>
<div class="cl" style="top:618.44px;left:543.72px"><span style="color:#abb2bf"><i class="ab">&lt;</i>/</span><span style="color:#e06c75">n<i class="hy">-</i>layout</span><span style="color:#abb2bf"><i class="ab">&gt;</i></span></div>
<div class="ln" style="top:644.19px">23</div>
<div class="cl" style="top:644.19px;left:498.20px"><span style="color:#abb2bf"><i class="ab">&lt;</i>/</span><span style="color:#e06c75">template</span><span style="color:#abb2bf"><i class="ab">&gt;</i></span></div>
<div class="ln" style="top:669.93px">24</div>
<div class="ln act" style="top:695.68px">25</div>
<div class="cl" style="top:695.68px;left:498.20px"><span style="color:#abb2bf"><i class="ab">&lt;</i></span><span style="color:#e06c75">script</span><span style="color:#abb2bf"> </span><span style="color:#d19a66">setup</span><span style="color:#abb2bf"><i class="ab">&gt;</i></span></div>
<i class="rb" style="left:498px;top:722px;width:46px;height:26px;background:rgba(255,255,64,0.07)"></i>
<div class="ln" style="top:721.42px">26</div>
<div class="cl" style="top:721.42px;left:543.72px"><span style="color:#c678dd">import</span><span style="color:#abb2bf"> </span><span style="color:#d19a66">{</span><span style="color:#abb2bf"> </span><span style="color:#e06c75">useMessage</span><span style="color:#abb2bf"> </span><span style="color:#d19a66">}</span><span style="color:#abb2bf"> </span><span style="color:#c678dd">from</span><span style="color:#abb2bf"> </span><span style="color:#98c379">'naive<i class="hy">-</i>ui'</span></div>
<div class="ln" style="top:747.17px">27</div>
<i class="rb" style="left:498px;top:773px;width:46px;height:26px;background:rgba(255,255,64,0.07)"></i>
<div class="ln" style="top:772.91px">28</div>
<div class="cl" style="top:772.91px;left:543.72px"><span style="color:#c678dd">import</span><span style="color:#abb2bf"> </span><span style="color:#e06c75">Footer</span><span style="color:#abb2bf"> </span><span style="color:#c678dd">from</span><span style="color:#abb2bf"> </span><span style="color:#98c379">"@W/footer.vue"</span></div>
<div class="ln" style="top:798.66px">29</div>
<i class="rb" style="left:498px;top:825px;width:46px;height:26px;background:rgba(255,255,64,0.07)"></i>
<div class="ln" style="top:824.40px">30</div>
<div class="cl" style="top:824.40px;left:543.72px"><span style="color:#c678dd">const</span><span style="color:#abb2bf"> </span><span class="yb" style="color:#e5c07b">message</span><span style="color:#abb2bf"> </span><span style="color:#56b6c2">=</span><span style="color:#abb2bf"> </span><span style="color:#61afef">useMessage</span><span style="color:#d19a66">()</span></div>
<i class="rb" style="left:498px;top:851px;width:46px;height:25px;background:rgba(255,255,64,0.07)"></i>
<div class="ln" style="top:850.15px">31</div>
<div class="cl" style="top:850.15px;left:543.72px"><span style="color:#c678dd">const</span><span style="color:#abb2bf"> </span><span class="yb" style="color:#e5c07b">bordered</span><span style="color:#abb2bf">  </span><span style="color:#56b6c2">=</span><span style="color:#abb2bf"> </span><span style="color:#d19a66">false</span></div>
<i class="rb" style="left:498px;top:876px;width:46px;height:26px;background:rgba(255,255,64,0.07)"></i>
<div class="ln" style="top:875.89px">32</div>
<div class="cl" style="top:875.89px;left:543.72px"><span style="color:#c678dd">const</span><span style="color:#abb2bf"> </span><span class="yb" style="color:#e5c07b">size</span><span style="color:#abb2bf">      </span><span style="color:#56b6c2">=</span><span style="color:#abb2bf"> </span><span style="color:#98c379">"large"</span></div>
<div class="ln" style="top:901.64px">33</div>
<i class="rb" style="left:498px;top:928px;width:46px;height:26px;background:rgba(255,255,64,0.07)"></i>
<div class="ln" style="top:927.38px">34</div>
<div class="cl" style="top:927.38px;left:543.72px"><span style="color:#c678dd">const</span><span style="color:#abb2bf"> </span><span class="yb" style="color:#e5c07b">bean</span><span style="color:#abb2bf"> </span><span style="color:#56b6c2">=</span><span style="color:#abb2bf"> </span><span style="color:#61afef">reactive</span><span style="color:#d19a66">(</span><span style="color:#c678dd">{</span><span style="color:#abb2bf"> </span><span style="color:#e06c75">ip</span><span style="color:#abb2bf">:</span><span style="color:#d19a66">undefined</span><span style="color:#abb2bf">, </span><span style="color:#e06c75">mask</span><span style="color:#abb2bf">:</span><span style="color:#d19a66">undefined</span><span style="color:#abb2bf"> </span><span style="color:#c678dd">}</span><span style="color:#d19a66">)</span></div>
<div class="ln" style="top:953.13px">35</div>
<i class="rb" style="left:498px;top:979px;width:46px;height:26px;background:rgba(255,255,64,0.07)"></i>
<div class="ln" style="top:978.88px">36</div>
<div class="cl" style="top:978.88px;left:543.72px"><span style="color:#c678dd">const</span><span style="color:#abb2bf"> </span><span style="color:#61afef">calc</span><span style="color:#abb2bf"> </span><span style="color:#56b6c2">=</span><span style="color:#abb2bf"> </span><span style="color:#d19a66">()</span><span class="arrow" style="color:#c678dd">⇒</span><span style="color:#d19a66">{</span></div>
<i class="rb" style="left:498px;top:1005px;width:46px;height:26px;background:rgba(255,255,64,0.07)"></i>
<i class="rb" style="left:544px;top:1005px;width:45px;height:26px;background:rgba(127,255,127,0.07)"></i>
<i class="gd" style="left:544px;top:1005px;height:26px"></i>
<div class="ln" style="top:1004.62px">37</div>
<div class="cl" style="top:1004.62px;left:589.24px"><span style="color:#c678dd">if</span><span style="color:#c678dd">(</span><span style="color:#56b6c2">!</span><span class="yb" style="color:#e5c07b">bean</span><span style="color:#abb2bf">.</span><span style="color:#e06c75">ip</span><span style="color:#abb2bf"> </span><span style="color:#56b6c2">||</span><span style="color:#abb2bf"> </span><span style="color:#56b6c2">!</span><span class="yb" style="color:#e5c07b">bean</span><span style="color:#abb2bf">.</span><span style="color:#e06c75">mask</span><span style="color:#c678dd">)</span></div>
<i class="rb" style="left:498px;top:1031px;width:46px;height:26px;background:rgba(255,255,64,0.07)"></i>
<i class="rb" style="left:544px;top:1031px;width:45px;height:26px;background:rgba(127,255,127,0.07)"></i>
<i class="rb" style="left:589px;top:1031px;width:46px;height:26px;background:rgba(255,127,255,0.07)"></i>
<i class="gd" style="left:544px;top:1031px;height:26px"></i>
<i class="gd" style="left:589px;top:1031px;height:26px"></i>
<div class="ln" style="top:1030.37px">38</div>
<div class="cl" style="top:1030.37px;left:634.76px"><span style="color:#c678dd">return</span><span style="color:#abb2bf"> </span><span class="yb" style="color:#e5c07b">message</span><span style="color:#abb2bf">.</span><span style="color:#61afef">warning</span><span style="color:#c678dd">(</span><span style="color:#98c379">`IP<b class="cj">及通配符掩码必须填写</b>`</span><span style="color:#c678dd">)</span></div>
<i class="rb" style="left:498px;top:1057px;width:46px;height:25px;background:rgba(255,255,64,0.07)"></i>
<div class="ln" style="top:1056.11px">39</div>
<div class="cl" style="top:1056.11px;left:543.72px"><span style="color:#d19a66">}</span></div>
<div class="ln" style="top:1081.86px">40</div>
<i class="rb" style="left:498px;top:1108px;width:46px;height:26px;background:rgba(255,255,64,0.07)"></i>
<div class="ln" style="top:1107.60px">41</div>
<div class="cl" style="top:1107.60px;left:543.72px"><span style="color:#c678dd">const</span><span style="color:#abb2bf"> </span><span style="color:#61afef">toNote</span><span style="color:#abb2bf"> </span><span style="color:#56b6c2">=</span><span style="color:#abb2bf"> </span><span style="color:#d19a66">()</span><span class="arrow" style="color:#c678dd">⇒</span><span style="color:#d19a66">{</span></div>
<div class="ln" style="top:1133.35px">42</div>
<i class="rb" style="left:498px;top:1160px;width:46px;height:25px;background:rgba(255,255,64,0.07)"></i>
<div class="ln" style="top:1159.09px">43</div>
<div class="cl" style="top:1159.09px;left:543.72px"><span style="color:#d19a66">}</span></div>
<div class="ln" style="top:1184.84px">44</div>
<div class="cl" style="top:1184.84px;left:498.20px"><span style="color:#abb2bf"><i class="ab">&lt;</i>/</span><span style="color:#e06c75">script</span><span style="color:#abb2bf"><i class="ab">&gt;</i></span></div>
<!-- watermarks -->
<div class="abs wm1" style="left:1173.4px;top:1138.2px;">掘金技术社区</div>
<div class="abs wm1" style="left:1329.6px;top:1138.2px;font-size:22.6px;">@</div>
<div class="abs wm1" style="left:1357px;top:1138.2px;">集成显卡</div>
<div class="abs wm2" style="left:1263.6px;top:1154px;font-size:26px;letter-spacing:-0.35px;">CSDN</div>
<div class="abs wm2" style="left:1347.6px;top:1154px;font-size:23.4px;">@</div>
<div class="abs wm2" style="left:1372.6px;top:1154.9px;font-size:28.3px;transform:scaleY(1.08);">集成显卡</div>
</body>
</html>
